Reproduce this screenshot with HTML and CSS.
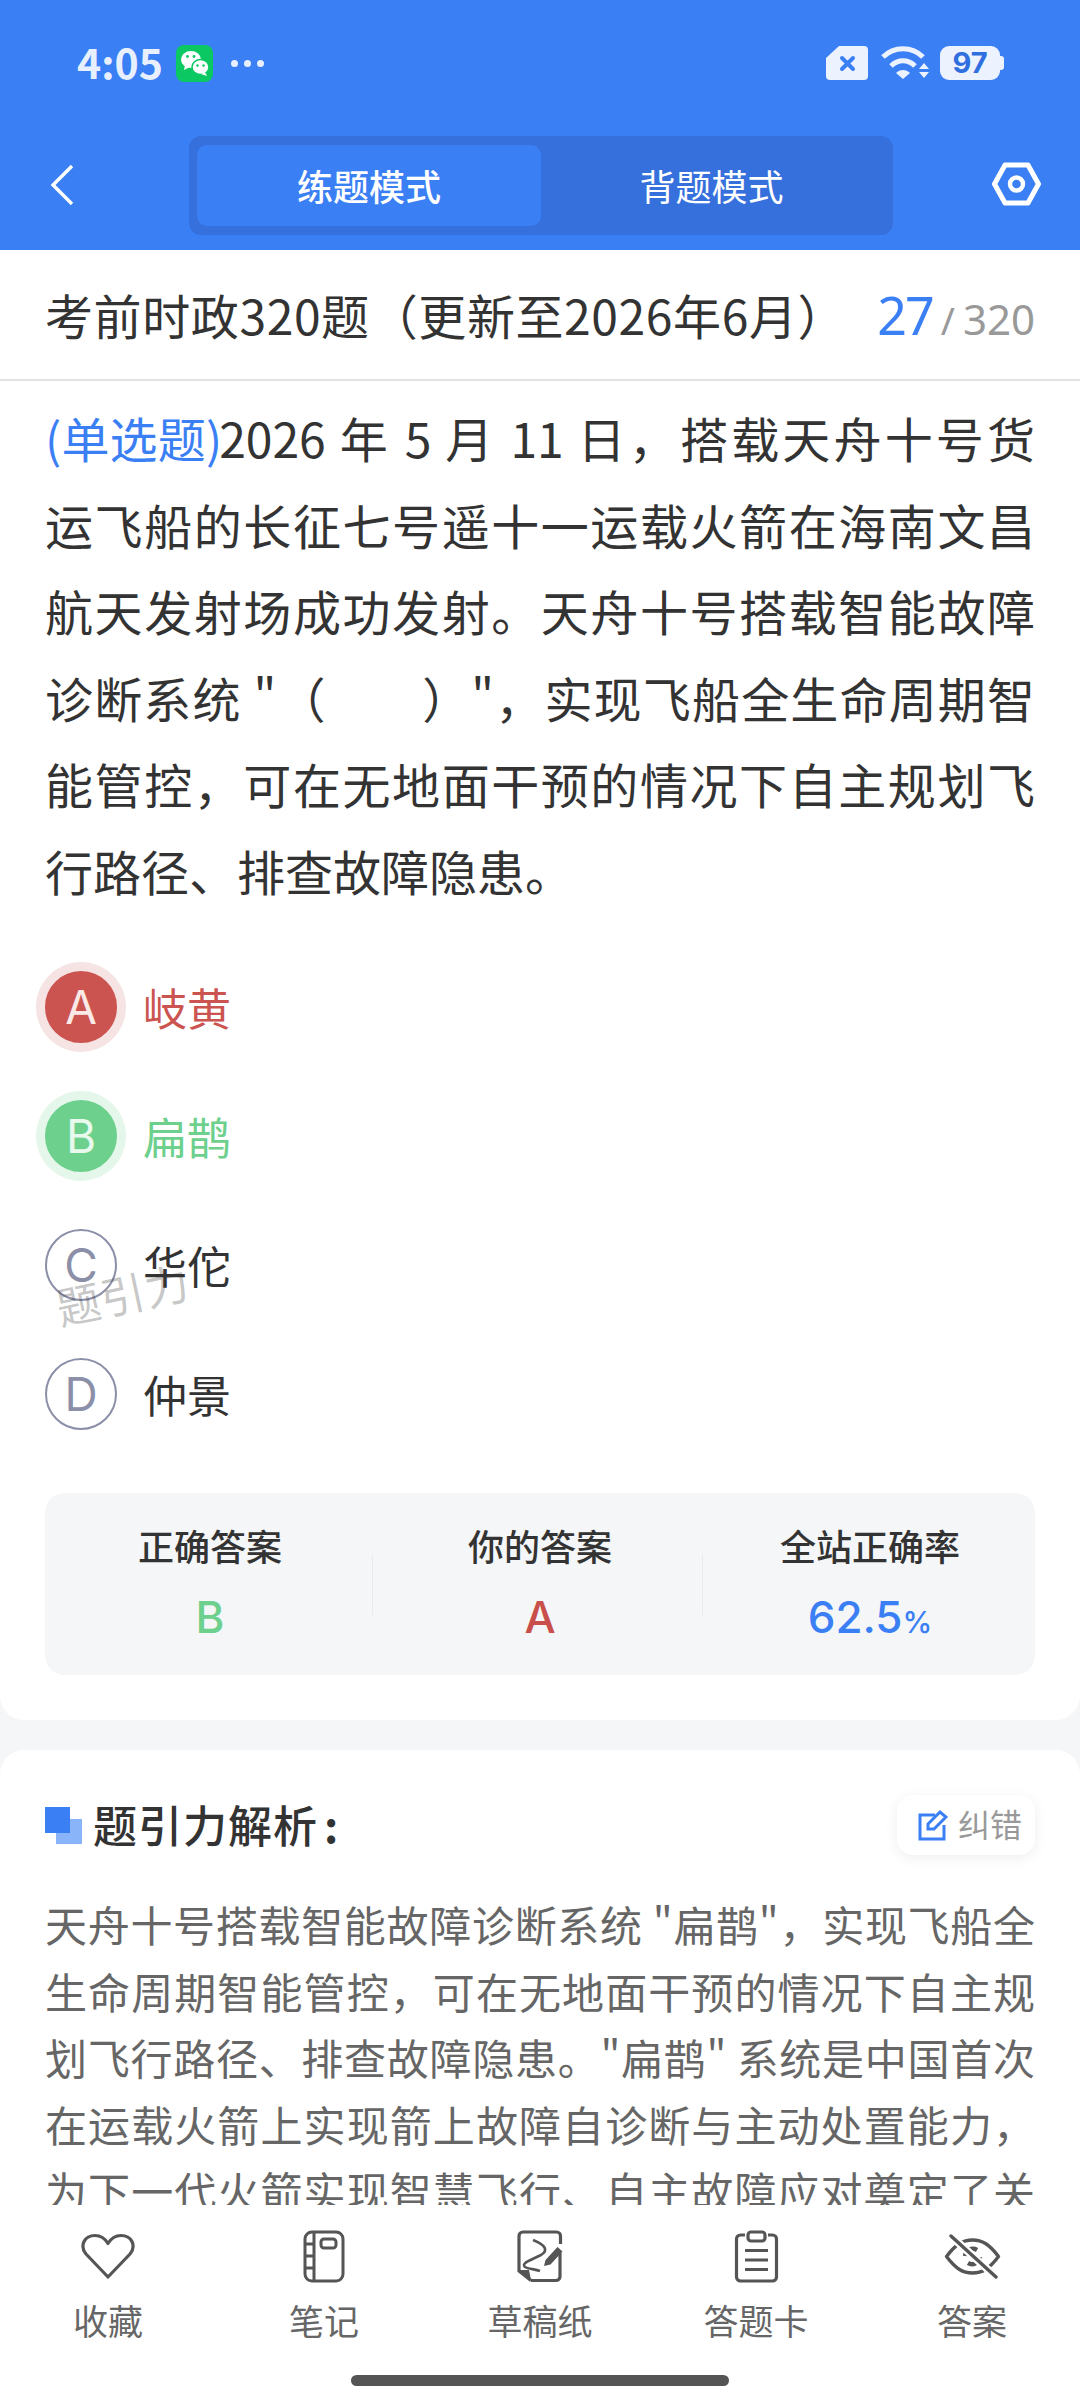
FILE: index.html
```html
<!DOCTYPE html>
<html lang="zh-CN">
<head>
<meta charset="utf-8">
<title>考前时政320题</title>
<link rel="stylesheet" href="styles.css">
</head>
<body>
<div class="page">
  <header class="top">
    <div class="status">
      <div class="status-left">
        <span class="time">4:05</span>
        <svg class="wechat" viewBox="0 0 37 37"><rect width="37" height="37" rx="8" fill="#0bc862"/><ellipse cx="15" cy="14.5" rx="10" ry="8.5" fill="#fff"/><path d="M9 20l-1 5 6-3z" fill="#fff"/><ellipse cx="24.5" cy="22" rx="8.5" ry="7.5" fill="#fff" stroke="#0bc862" stroke-width="1.5"/><path d="M29 27l2 4-6-2z" fill="#fff"/><circle cx="11.5" cy="11.5" r="1.4" fill="#0bc862"/><circle cx="18" cy="11.5" r="1.4" fill="#0bc862"/><circle cx="21.5" cy="20.5" r="1.2" fill="#0bc862"/><circle cx="27.5" cy="20.5" r="1.2" fill="#0bc862"/></svg>
        <span class="dots"><i></i><i></i><i></i></span>
      </div>
      <div class="status-right">
        <svg class="sim" viewBox="0 0 43 34"><path d="M13 0H38a4 4 0 0 1 4 4V30a4 4 0 0 1-4 4H4a4 4 0 0 1-4-4V12z" fill="#edf3fe"/><path d="M16 12l11 11M27 12L16 23" stroke="#3b7ff5" stroke-width="4" stroke-linecap="round"/></svg>
        <svg class="wifi" viewBox="0 0 49 34"><path d="M2 11C13 0 31 0 42 11" fill="none" stroke="#edf3fe" stroke-width="5"/><path d="M10 20c7-7 17-7 24 0" fill="none" stroke="#edf3fe" stroke-width="5"/><path d="M15 27c4-4 10-4 14 0l-7 6z" fill="#edf3fe"/><path d="M43 17l5 6H38zM38 26h10l-5 6z" fill="#edf3fe"/></svg>
        <div class="batt">97</div>
      </div>
    </div>
    <nav class="bar">
      <svg class="back" viewBox="0 0 24 42"><path d="M22 2L3 21l19 19" fill="none" stroke="#fff" stroke-width="3.4"/></svg>
      <div class="seg">
        <span class="tab on">练题模式</span>
        <span class="tab">背题模式</span>
      </div>
      <svg class="gear" viewBox="0 0 49 44"><path d="M13 3H36L46.5 22 36 41H13L2.5 22z" fill="none" stroke="#fff" stroke-width="5" stroke-linejoin="round"/><circle cx="24.5" cy="22" r="6.5" fill="none" stroke="#fff" stroke-width="4.4"/></svg>
    </nav>
  </header>

  <main class="main">
    <section class="card first">
      <div class="title-row">
        <h1 class="title">考前时政320题（更新至2026年6月）</h1>
        <div class="count"><b>27</b><i>/</i><span>320</span></div>
      </div>
      <div class="body">
        <p class="question">
          <span class="ln"><em>(单选题)</em>2026 年 5 月 11 日，搭载天舟十号货</span>
          <span class="ln">运飞船的长征七号遥十一运载火箭在海南文昌</span>
          <span class="ln">航天发射场成功发射。天舟十号搭载智能故障</span>
          <span class="ln">诊断系统 "（&nbsp;&nbsp;&nbsp;&nbsp;&nbsp;&nbsp;&nbsp;&nbsp;）"，实现飞船全生命周期智</span>
          <span class="ln">能管控，可在无地面干预的情况下自主规划飞</span>
          <span class="ln end">行路径、排查故障隐患。</span>
        </p>
        <ul class="opts">
          <li class="opt wrong"><span class="mark">A</span><span>岐黄</span></li>
          <li class="opt right"><span class="mark">B</span><span>扁鹊</span></li>
          <li class="opt"><span class="mark">C</span><span>华佗</span><span class="water">题引力</span></li>
          <li class="opt"><span class="mark">D</span><span>仲景</span></li>
        </ul>
        <div class="stats">
          <div class="stat"><span class="lab">正确答案</span><strong class="val green">B</strong></div>
          <div class="stat"><span class="lab">你的答案</span><strong class="val red">A</strong></div>
          <div class="stat"><span class="lab">全站正确率</span><strong class="val blue">62.5<small>%</small></strong></div>
        </div>
      </div>
    </section>

    <section class="card second">
      <div class="head">
        <h2 class="h2"><span class="squares"></span>题引力解析<span class="colon">:</span></h2>
        <div class="fix">
          <svg class="fix-ico" viewBox="0 0 30 31"><path d="M17 5H2v24h24V15" fill="none" stroke="#3b7ff5" stroke-width="3"/><path d="M10 14L22 2l6 5-12 12h-6z" fill="none" stroke="#3b7ff5" stroke-width="3"/></svg>
          <span class="fix-text">纠错</span>
        </div>
      </div>
      <p class="analysis">
        <span class="ln">天舟十号搭载智能故障诊断系统 "扁鹊"，实现飞船全</span>
        <span class="ln">生命周期智能管控，可在无地面干预的情况下自主规</span>
        <span class="ln">划飞行路径、排查故障隐患。"扁鹊" 系统是中国首次</span>
        <span class="ln">在运载火箭上实现箭上故障自诊断与主动处置能力，</span>
        <span class="ln">为下一代火箭实现智慧飞行、自主故障应对奠定了关</span>
      </p>
    </section>
  </main>

  <footer class="dock">
    <div class="tools">
      <div class="tool">
        <div class="ico"><svg class="i-heart" viewBox="0 0 54 47"><path d="M27 44L5 21C-2 12 4 2.5 14 2.5c6 0 10 3 13 8 3-5 7-8 13-8 10 0 16 9.500 9 18.500z" fill="none" stroke="#555" stroke-width="3.2" stroke-linejoin="round"/></svg></div>
        <span>收藏</span>
      </div>
      <div class="tool">
        <div class="ico"><svg class="i-note" viewBox="0 0 42 53"><rect x="2" y="2" width="38" height="49" rx="7" fill="none" stroke="#555" stroke-width="3"/><path d="M11 2v49M2 14h9M2 26h9M2 38h9" fill="none" stroke="#555" stroke-width="3"/><rect x="18" y="9" width="15" height="9" rx="3" fill="none" stroke="#555" stroke-width="3"/></svg></div>
        <span>笔记</span>
      </div>
      <div class="tool">
        <div class="ico"><svg class="i-draft" viewBox="0 0 46 53"><path d="M14 50.500H39a4 4 0 0 0 4-4V23M43.500 14V6a4 4 0 0 0-4-4H6a4 4 0 0 0-4 4V41L14 50.500" fill="none" stroke="#555" stroke-width="3.200"/><path d="M2 40H12L14 50z" fill="#555"/><path d="M16 10C28 15 32 20 24 25 12 31 4 33 8 37 11 39 18 39 23 41" fill="none" stroke="#555" stroke-width="2.600"/><path d="M27 36l1.500-6 12-13 5 4.500-12 13z" fill="#555"/></svg></div>
        <span>草稿纸</span>
      </div>
      <div class="tool">
        <div class="ico"><svg class="i-card" viewBox="0 0 45 53"><path d="M11 5H6.500a4 4 0 0 0-4 4V47a4 4 0 0 0 4 4H38.500a4 4 0 0 0 4-4V9a4 4 0 0 0-4-4H34" fill="none" stroke="#555" stroke-width="3.200"/><rect x="14" y="2" width="17" height="9" rx="3" fill="none" stroke="#555" stroke-width="3.200"/><path d="M11 20.500h23M11 30h23M11 39.500h23" fill="none" stroke="#555" stroke-width="3.200"/></svg></div>
        <span>答题卡</span>
      </div>
      <div class="tool">
        <div class="ico"><svg class="i-eye" viewBox="0 0 57 45"><path d="M2.500 22.500C12 10 19 6 28.500 6S45 10 54.500 22.500C45 35 38 39 28.500 39S12 35 2.500 22.500z" fill="none" stroke="#555" stroke-width="3.400" stroke-linejoin="round"/><path d="M21 22a8 8 0 0 1 12-6M36 23a8 8 0 0 1-12 6" fill="none" stroke="#555" stroke-width="4.500"/><path d="M7 2L52 43" stroke="#fff" stroke-width="8"/><path d="M7 2L52 43" stroke="#555" stroke-width="3.400" stroke-linecap="round"/></svg></div>
        <span>答案</span>
      </div>
    </div>
    <div class="home"></div>
  </footer>
</div>
</body>
</html>
```

FILE: styles.css
```css
* { box-sizing: border-box; margin: 0; padding: 0; }
html, body { width: 1080px; height: 2400px; overflow: hidden; }
body { font-family: "Noto Sans CJK SC", "Noto Sans", sans-serif; color: #333; background: #f5f6f8; text-spacing-trim: space-all; }
.page { width: 1080px; height: 2400px; display: flex; flex-direction: column; overflow: hidden; }

.top { height: 250px; background: #3b7ff5; flex: none; }
.status { height: 136px; padding: 45px 80px 0 77px; display: flex; justify-content: space-between; align-items: flex-start; }
.status-left { display: flex; align-items: center; height: 37px; }
.time { font-family: "Noto Sans CJK SC", sans-serif; font-weight: 700; font-size: 41px; color: #e8effe; width: 99px; line-height: 37px; margin-bottom: 5px; white-space: nowrap; }
.wechat { width: 37px; height: 37px; }
.dots { display: flex; gap: 6px; margin-left: 18px; }
.dots i { width: 7px; height: 7px; border-radius: 50%; background: #e8effe; }
.status-right { display: flex; align-items: center; height: 34px; margin-top: 1px; }
.sim { width: 43px; height: 34px; }
.wifi { width: 49px; height: 34px; margin-left: 12px; }
.batt { position: relative; width: 60px; height: 34px; margin-left: 10px; background: #edf3fe; border-radius: 9px; color: #2f6fe0; font-family: Inter, sans-serif; font-weight: 700; font-size: 29px; line-height: 34px; text-align: center; }
.batt::after { content: ""; position: absolute; left: 60px; top: 10px; width: 4px; height: 14px; background: #edf3fe; border-radius: 0 3px 3px 0; }

.bar { height: 114px; display: flex; align-items: flex-start; }
.back { width: 24px; height: 42px; margin: 28px 0 0 50px; flex: none; }
.seg { width: 704px; height: 99px; margin-left: 115px; padding: 9px 8px; background: #3570dd; border-radius: 12px; display: flex; flex: none; }
.tab { width: 344px; height: 81px; padding-right: 3px; border-radius: 10px; text-align: center; font-size: 36px; line-height: 80px; color: #fff; }
.tab.on { padding-right: 0; background: #3b7ff5; font-weight: 500; }
.gear { width: 49px; height: 44px; margin: 26px 0 0 99px; flex: none; }

.main { flex: 1; min-height: 0; overflow: hidden; }
.card { background: #fff; }
.first { height: 1470px; border-radius: 0 0 24px 24px; }
.second { margin-top: 30px; padding: 45px 45px 0; border-radius: 24px 24px 0 0; }

.title-row { height: 131px; padding: 0 45px; border-bottom: 2px solid #e2e2e2; display: flex; justify-content: space-between; align-items: center; }
.title { font-size: 48px; font-weight: 400; color: #333; letter-spacing: 0.6px; white-space: nowrap; line-height: 1; margin-bottom: 2px; }
.count { display: flex; align-items: baseline; color: #999; font-size: 42px; font-family: "Noto Sans", sans-serif; white-space: nowrap; }
.count b { font-weight: 400; font-size: 52px; letter-spacing: -2px; color: #3b7ff5; }
.count i { font-style: normal; margin: 0 8px; font-size: 38px; }

.body { padding: 13px 45px 0; }
.question { font-size: 48px; line-height: 86.6px; color: #333; }
.ln { display: block; text-align: justify; text-align-last: justify; white-space: nowrap; }
.ln.end { text-align-last: left; }
.question em { font-style: normal; color: #3b7ff5; letter-spacing: -3px; }

.opts { list-style: none; margin-top: 29px; }
.opt { position: relative; height: 129px; display: flex; align-items: center; gap: 26px; font-size: 44px; color: #333; }
.mark { width: 72px; height: 72px; flex: none; border-radius: 50%; border: 2px solid #8b8fa8; color: #8b8fa8; font-family: Inter, sans-serif; font-size: 46px; line-height: 68px; text-align: center; }
.wrong { color: #cc5450; }
.wrong .mark { background: #cc5450; border-color: #cc5450; color: #fbe9e8; box-shadow: 0 0 0 9px #f6e4e4; }
.right { color: #6dd08d; }
.right .mark { background: #6dd08d; border-color: #6dd08d; color: #e8f9ee; box-shadow: 0 0 0 9px #e4f7ea; }
.water { position: absolute; left: 10px; top: 67px; font-size: 44px; line-height: 50px; color: rgba(60, 60, 60, 0.3); transform: rotate(-12deg); letter-spacing: 1px; }

.stats { margin-top: 34px; height: 182px; background: #f5f6f8; border-radius: 20px; display: flex; }
.stat { position: relative; flex: 1; display: flex; flex-direction: column; align-items: center; padding-top: 26px; }
.stat + .stat::before { content: ""; position: absolute; left: -3px; top: 62px; height: 60px; width: 1px; background: #e9ebee; }
.lab { font-size: 36px; line-height: 52px; font-weight: 500; color: #333; }
.val { font-family: Inter, sans-serif; font-size: 44px; line-height: 56px; margin-top: 18px; font-weight: 500; }
.green { color: #6dd08d; }
.red { color: #c94f4b; }
.blue { color: #3b7ff5; }
.val small { font-size: 30px; }

.head { height: 60px; display: flex; justify-content: space-between; align-items: center; }
.h2 { display: flex; align-items: center; font-size: 44px; font-weight: 500; letter-spacing: 1px; color: #333; line-height: 58px; margin-bottom: 2px; }
.squares { position: relative; width: 37px; height: 37px; margin-right: 11px; margin-top: 2px; }
.squares::before { content: ""; position: absolute; left: 11px; top: 12px; width: 26px; height: 25px; background: #8ab4fa; }
.squares::after { content: ""; position: absolute; left: 0; top: 0; width: 25px; height: 26px; background: #3b7ff5; }
.colon { margin-left: 6px; font-weight: 700; }
.fix { width: 138px; height: 60px; border-radius: 16px; background: #fff; box-shadow: 0 3px 14px rgba(0, 0, 0, 0.07); display: flex; align-items: center; padding-left: 21px; font-size: 32px; color: #999; }
.fix-ico { width: 30px; height: 31px; margin-right: 10px; }
.fix-text { margin-bottom: 4px; }
.analysis { margin-top: 36px; font-size: 42px; line-height: 66.6px; color: #666; }

.dock { height: 195px; flex: none; background: #fff; display: flex; flex-direction: column; }
.tools { display: flex; padding-top: 24px; }
.tool { flex: 1; display: flex; flex-direction: column; align-items: center; color: #666; font-size: 35px; line-height: 50px; }
.ico { height: 54px; margin-bottom: 12px; display: flex; align-items: center; justify-content: center; }
.i-heart { width: 54px; height: 47px; }
.i-note { width: 42px; height: 53px; }
.i-draft { width: 46px; height: 53px; }
.i-card { width: 45px; height: 53px; }
.i-eye { width: 57px; height: 45px; }
.home { width: 378px; height: 11px; border-radius: 6px; background: #555; margin: 30px auto 0; }
```
